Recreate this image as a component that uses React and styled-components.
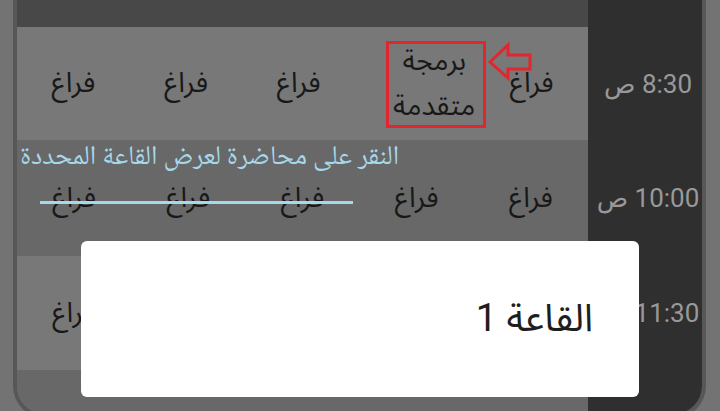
import React from "react";
import styled, { createGlobalStyle } from "styled-components";

const GlobalStyle = createGlobalStyle`
  html, body {
    margin: 0;
    padding: 0;
    background: #737373;
    overflow: hidden;
  }
`;

const Page = styled.div`
  width: 720px;
  height: 411px;
  position: relative;
  overflow: hidden;
  background: #737373;
`;

const Frame = styled.div`
  margin-left: 13px;
  width: 693px;
  height: 418px;
  box-sizing: border-box;
  border: 4px solid #575757;
  border-top: none;
  border-radius: 0 0 32px 32px;
  overflow: hidden;
  display: grid;
  grid-template-columns: 571px 1fr;
  grid-template-rows: 27px 113px 116px 114px 1fr;
  direction: ltr;
  font-family: "Noto Sans Arabic", "DejaVu Sans", sans-serif;
`;

const HeaderBand = styled.div`
  background: #484848;
`;

const TimeCell = styled.div`
  background: #2f2f2f;
  display: flex;
  align-items: center;
  justify-content: center;
  direction: rtl;
  color: #999999;
  font-family: Roboto, "DejaVu Sans", sans-serif;
  font-size: 26px;
  white-space: nowrap;
  padding-left: 6px;
`;

const Row = styled.div`
  background: ${(p) => (p.$dark ? "#686868" : "#787878")};
  display: grid;
  grid-template-columns: repeat(5, 1fr);
  direction: rtl;
`;

const Cell = styled.div`
  display: flex;
  align-items: center;
  justify-content: center;
  text-align: center;
  color: #181818;
  font-size: 28px;
  line-height: 45px;
  padding-left: ${(p) => (p.$shift ? "38px" : "0")};
`;

const Annotation = styled.div`
  position: absolute;
  left: 20px;
  top: 135px;
  direction: rtl;
  color: #a7d8ea;
  font-size: 27px;
  white-space: nowrap;
  font-family: "Noto Naskh Arabic", "DejaVu Sans", serif;
`;

const StrikeLine = styled.div`
  position: absolute;
  left: 40px;
  top: 201px;
  width: 313px;
  height: 3px;
  background: #a7d8ea;
`;

const RedBox = styled.div`
  position: absolute;
  left: 386px;
  top: 41px;
  width: 100px;
  height: 87px;
  box-sizing: border-box;
  border: 3px solid #e2262d;
`;

const Arrow = styled.svg`
  position: absolute;
  left: 486px;
  top: 41px;
`;

const Scrim = styled.div`
  position: absolute;
  inset: 0;
  display: flex;
  align-items: flex-end;
  justify-content: center;
  padding-bottom: 14px;
  box-sizing: border-box;
`;

const Dialog = styled.div`
  width: 558px;
  height: 156px;
  background: #ffffff;
  border-radius: 6px;
  display: flex;
  align-items: center;
  justify-content: flex-start;
  direction: rtl;
  padding-right: 46px;
  box-sizing: border-box;
  color: #1e1e1e;
  font-size: 38px;
  font-family: Roboto, "Noto Sans Arabic", "DejaVu Sans", sans-serif;
`;

const rows = [
  { time: "8:30 ص", cells: ["فراغ", "برمجة\nمتقدمة", "فراغ", "فراغ", "فراغ"] },
  { time: "10:00 ص", cells: ["فراغ", "فراغ", "فراغ", "فراغ", "فراغ"] },
  { time: "11:30 ص", cells: ["فراغ", "فراغ", "فراغ", "فراغ", "فراغ"] },
  { time: "", cells: ["", "", "", "", ""] },
];

export default function App() {
  return (
    <Page>
      <GlobalStyle />
      <Frame>
        <HeaderBand />
        <TimeCell />
        {rows.map((row, i) => (
          <React.Fragment key={i}>
            <Row $dark={i % 2 === 1}>
              {row.cells.map((c, j) => {
                const lines = c.split("\n");
                return (
                  <Cell key={j} $shift={lines.length > 1}>
                    <span>
                      {lines.map((l, k) => (
                        <React.Fragment key={k}>
                          {k > 0 && <br />}
                          {l}
                        </React.Fragment>
                      ))}
                    </span>
                  </Cell>
                );
              })}
            </Row>
            <TimeCell>{row.time}</TimeCell>
          </React.Fragment>
        ))}
      </Frame>

      {/* annotations drawn over the screenshot */}
      <RedBox />
      <Arrow width="48" height="42" viewBox="486 41 48 42">
        <polygon
          points="490,62 508,45 508,55 530,55 530,69 508,69 508,78"
          fill="none"
          stroke="#e2262d"
          strokeWidth="3"
        />
      </Arrow>
      <Annotation>النقر على محاضرة لعرض القاعة المحددة</Annotation>
      <StrikeLine />

      <Scrim>
        <Dialog>القاعة 1</Dialog>
      </Scrim>
    </Page>
  );
}
